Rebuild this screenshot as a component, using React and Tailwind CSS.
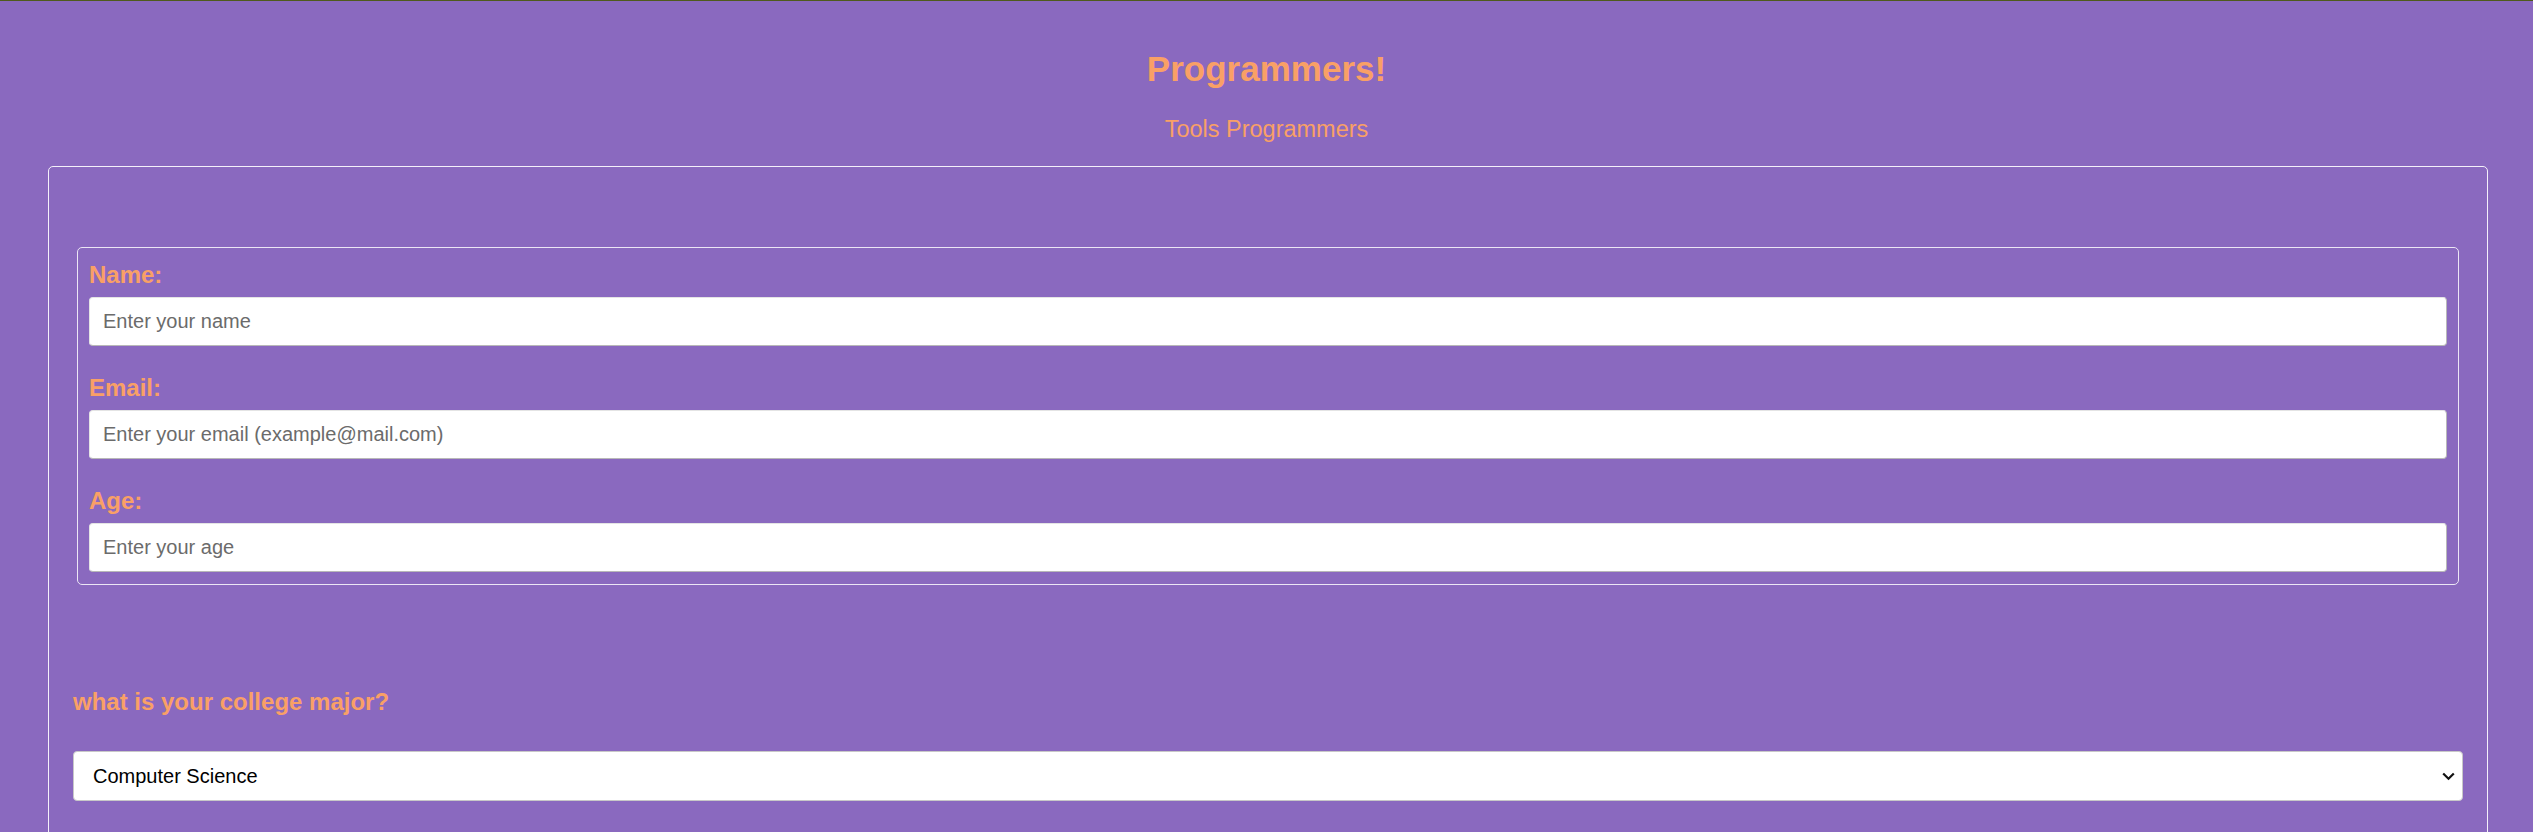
import React from "react";

const font = { fontFamily: '"Liberation Sans", Arial, sans-serif' };

function Field({ label, placeholder, last }) {
  return (
    <div className={last ? "" : "mb-[28px]"}>
      <label className="block text-[24px] leading-[28px] font-bold text-[#f9a066] mb-[8px]">
        {label}
      </label>
      <input
        type="text"
        placeholder={placeholder}
        className="block w-full h-[49px] px-[13px] text-[20px] bg-white rounded-[4px] border border-t-[#e4e4e4] border-l-[#e4e4e4] border-r-[#b8b8b8] border-b-[#b8b8b8] placeholder:text-[#6b6b6b] text-black outline-none"
      />
    </div>
  );
}

export default function App() {
  return (
    <div className="min-h-[832px] bg-[#8a69bf] border-t border-[#4f5a1c]" style={font}>
      <div className="pt-[48px] text-center">
        <h1 className="text-[35px] leading-[40px] font-bold text-[#f9a066]">Programmers!</h1>
        <p className="mt-[27px] text-[23.5px] leading-[27px] text-[#f9a066]">Tools Programmers</p>
      </div>
      <div className="mt-[23px] ml-[48px] mr-[45px] border border-[#f4f0fa] rounded-[5px] px-[24px] pt-[80px] pb-[200px]">
        <fieldset className="mx-[4px] border border-[#ece6f5] rounded-[5px] pt-[13px] pb-[12px] px-[11px]">
          <Field label="Name:" placeholder="Enter your name" />
          <Field label="Email:" placeholder="Enter your email (example@mail.com)" />
          <Field label="Age:" placeholder="Enter your age" last />
        </fieldset>
        <p className="mt-[103px] text-[24px] leading-[28px] font-bold text-[#f9a066]">
          what is your college major?
        </p>
        <div className="relative mt-[35px]">
          <select
            className="block w-full h-[50px] pl-[19px] pr-[40px] text-[20px] text-black bg-white rounded-[4px] border border-[#c8c8c8] appearance-none outline-none"
            defaultValue="cs"
          >
            <option value="cs">Computer Science</option>
            <option value="se">Software Engineering</option>
            <option value="it">Information Technology</option>
          </select>
          <svg
            className="pointer-events-none absolute right-[8px] top-[21px]"
            width="13"
            height="9"
            viewBox="0 0 13 9"
            fill="none"
          >
            <path d="M1.2 1.5 L6.5 6.8 L11.8 1.5" stroke="#111" strokeWidth="2.2" />
          </svg>
        </div>
      </div>
    </div>
  );
}
